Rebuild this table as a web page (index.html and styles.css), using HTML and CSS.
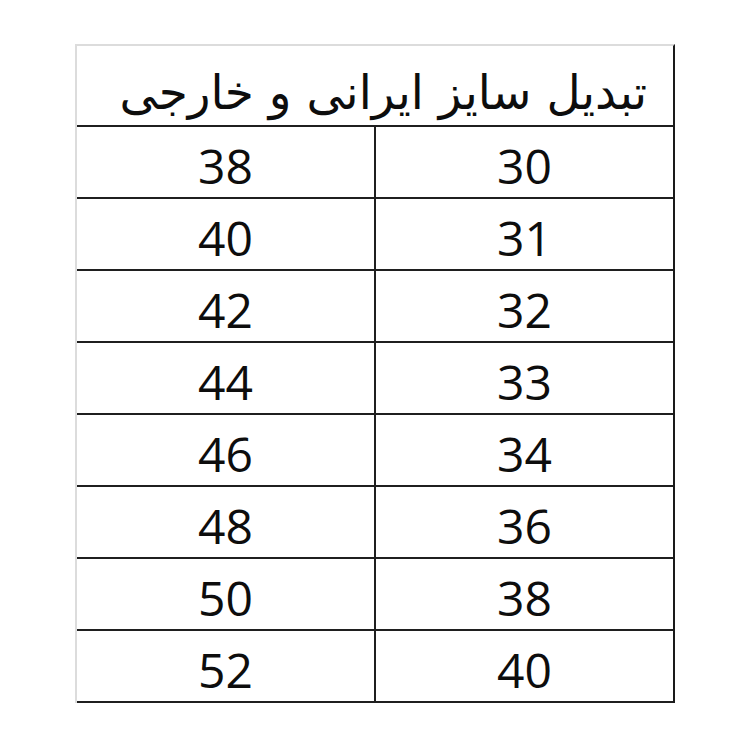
FILE: index.html
```html
<!DOCTYPE html>
<html lang="fa">
<head>
<meta charset="utf-8">
<link rel="stylesheet" href="styles.css">
</head>
<body>
<div class="sheet">
  <div class="title" dir="rtl">تبدیل سایز ایرانی و خارجی</div>
  <div class="grid">
    <div class="cell">38</div><div class="cell right">30</div>
    <div class="cell">40</div><div class="cell right">31</div>
    <div class="cell">42</div><div class="cell right">32</div>
    <div class="cell">44</div><div class="cell right">33</div>
    <div class="cell">46</div><div class="cell right">34</div>
    <div class="cell">48</div><div class="cell right">36</div>
    <div class="cell">50</div><div class="cell right">38</div>
    <div class="cell">52</div><div class="cell right">40</div>
  </div>
</div>
</body>
</html>
```
FILE: styles.css
```css
html, body {
  margin: 0;
  padding: 0;
  background: #ffffff;
}
body {
  width: 750px;
  height: 750px;
  padding: 44px 0 0 75px;
  box-sizing: border-box;
}
.sheet {
  width: 600px;
  border-top: 2px solid #dcdcdc;
  border-left: 2px solid #dcdcdc;
  border-right: 2px solid #1a1a1a;
  box-sizing: border-box;
  color: #0d0d0d;
}
.title {
  height: 81px;
  box-sizing: border-box;
  border-bottom: 2px solid #1f1f1f;
  font-family: "DejaVu Sans", sans-serif;
  font-size: 47px;
  line-height: 81px;
  padding-top: 6px;
  text-align: right;
  padding-right: 26px;
  white-space: nowrap;
}
.grid {
  display: grid;
  grid-template-columns: 297px 1fr;
  grid-auto-rows: 72px;
}
.cell {
  border-bottom: 2px solid #1f1f1f;
  font-family: "Open Sans", "Noto Sans", sans-serif;
  font-size: 48px;
  display: flex;
  align-items: center;
  justify-content: center;
  box-sizing: border-box;
  padding-top: 7px;
}
.right {
  border-left: 2px solid #1f1f1f;
}
```
